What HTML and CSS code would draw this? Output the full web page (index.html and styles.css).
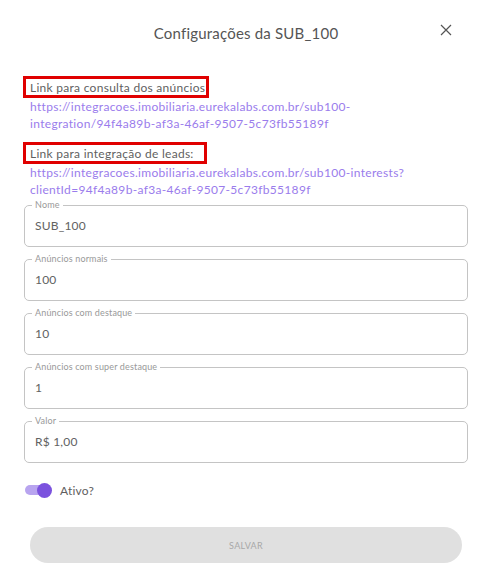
FILE: index.html
```html
<!DOCTYPE html>
<html lang="pt-BR">
<head>
<meta charset="utf-8">
<title>Configurações da SUB_100</title>
<link rel="stylesheet" href="styles.css">
</head>
<body>
<div class="modal">
  <header class="modal-header">
    <h1 class="modal-title">Configurações da SUB_100</h1>
    <button class="close-btn" aria-label="Fechar">
      <svg width="12" height="12" viewBox="0 0 12 12"><path d="M1 1L11 11M11 1L1 11" stroke="#555" stroke-width="1.2" fill="none"/></svg>
    </button>
  </header>
  <section class="links">
    <div class="link-block">
      <span class="link-label">Link para consulta dos anúncios</span>
      <a class="link-url">https://integracoes.imobiliaria.eurekalabs.com.br/sub100-integration/94f4a89b-af3a-46af-9507-5c73fb55189f</a>
    </div>
    <div class="link-block">
      <span class="link-label second">Link para integração de leads:</span>
      <a class="link-url">https://integracoes.imobiliaria.eurekalabs.com.br/sub100-interests?clientId=94f4a89b-af3a-46af-9507-5c73fb55189f</a>
    </div>
  </section>
  <form class="fields">
    <fieldset class="field"><legend>Nome</legend><div class="value">SUB_100</div></fieldset>
    <fieldset class="field"><legend>Anúncios normais</legend><div class="value">100</div></fieldset>
    <fieldset class="field"><legend>Anúncios com destaque</legend><div class="value">10</div></fieldset>
    <fieldset class="field"><legend>Anúncios com super destaque</legend><div class="value">1</div></fieldset>
    <fieldset class="field"><legend>Valor</legend><div class="value">R$ 1,00</div></fieldset>
  </form>
  <div class="toggle-row">
    <span class="toggle"><span class="track"></span><span class="knob"></span></span>
    <span class="toggle-label">Ativo?</span>
  </div>
  <div class="actions">
    <button class="save-btn" disabled>SALVAR</button>
  </div>
</div>
</body>
</html>
```
FILE: styles.css
```css
* { box-sizing: border-box; }
html, body { margin: 0; padding: 0; background: #fff; }
body { font-family: "Lato", "Noto Sans", sans-serif; color: #555; }
.modal { width: 497px; height: 580px; padding: 0 29px 0 24px; display: flex; flex-direction: column; }
.modal-header { height: 66px; display: flex; align-items: center; justify-content: center; position: relative; }
.modal-title { margin: 0; font-weight: 400; font-size: 15px; color: #555; letter-spacing: 0.2px; }
.close-btn { position: absolute; right: 15px; top: 23px; border: 0; background: none; padding: 0; width: 14px; height: 14px; display: flex; align-items: center; justify-content: center; }
.links { display: flex; flex-direction: column; gap: 10px; margin-top: 10px; }
.link-block { display: flex; flex-direction: column; }
.link-label { align-self: flex-start; border: 3px solid #e00000; padding: 1px 0 0 4px; margin-left: -1px; width: 186px; height: 22px; font-size: 12px; line-height: 16px; color: #5f5f5f; letter-spacing: 0.28px; }
.link-label.second { width: 184px; }
.link-url { color: #9a7cec; font-size: 12px; line-height: 17px; padding-left: 6px; padding-right: 50px; letter-spacing: 0.32px; }
.fields { margin: 3px 0 0; display: flex; flex-direction: column; gap: 8px; }
.field { margin: 0; border: 1px solid #c4c4c4; border-radius: 5px; height: 46px; padding: 0 10px; min-width: 0; }
.field legend { font-size: 9px; color: #999; padding: 0 3px; margin-left: -3px; line-height: 8px; letter-spacing: 0.15px; }
.value { font-size: 12px; color: #626262; padding-top: 9px; letter-spacing: 0.2px; }
.toggle-row { display: flex; align-items: center; gap: 8px; margin-top: 19px; padding-left: 1px; }
.toggle { position: relative; width: 27px; height: 16px; display: inline-block; }
.track { position: absolute; left: 0; top: 3px; width: 24px; height: 10px; border-radius: 5px; background: #b8a4ef; }
.knob { position: absolute; left: 12px; top: 0.5px; width: 15px; height: 15px; border-radius: 50%; background: #7b52de; }
.toggle-label { font-size: 12px; color: #5f5f5f; letter-spacing: 0.2px; }
.actions { margin-top: 29px; padding: 0 0 0 6px; }
.save-btn { width: 432px; height: 36px; border: 0; border-radius: 18px; background: #e0e0e0; color: #a8a8a8; font-family: inherit; font-size: 9px; letter-spacing: 0.3px; }
```
